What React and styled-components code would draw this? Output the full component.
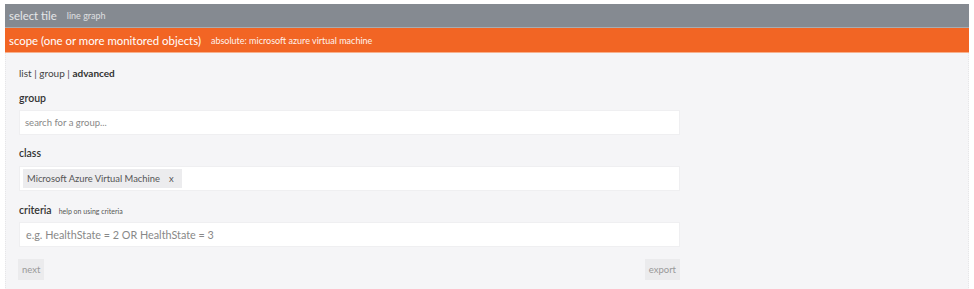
import React from "react";
import styled, { createGlobalStyle } from "styled-components";

const GlobalStyle = createGlobalStyle`
  body {
    margin: 0;
    background: #ffffff;
    font-family: Lato, "Open Sans", sans-serif;
  }
`;

const Page = styled.div`
  padding: 4px 5px 0 5px;
  width: 964px;
`;

const Bar = styled.div`
  display: flex;
  align-items: center;
  height: ${(p) => p.h}px;
  padding-left: 4px;
  background: ${(p) => p.bg};
  border-bottom: 1px solid ${(p) => p.line};
  color: ${(p) => p.fg};
`;

const BarTitle = styled.span`
  font-size: 11.4px;
`;

const BarSub = styled.span`
  font-size: 9px;
  margin-left: 10px;
  opacity: 0.92;
`;

const Panel = styled.div`
  background: #f5f5f7;
  border-left: 1px dotted #e6e6e8;
  border-right: 1px dotted #e6e6e8;
  padding: 13px 14px 10px 13px;
`;

const Form = styled.div`
  width: 661px;
  display: flex;
  flex-direction: column;
`;

const Modes = styled.div`
  font-size: 10px;
  line-height: 14px;
  color: #444;
  margin-bottom: 11px;
  b {
    font-weight: 700;
    color: #333;
  }
`;

const Label = styled.div`
  font-size: 10.5px;
  line-height: 14px;
  color: #333;
  font-weight: 600;
  margin-top: ${(p) => p.top || 0}px;
  margin-bottom: ${(p) => p.bottom || 5}px;
  display: flex;
  align-items: baseline;
`;

const Help = styled.span`
  font-size: 7px;
  font-weight: 400;
  color: #555;
  margin-left: 7px;
`;

const Field = styled.div`
  height: 25px;
  box-sizing: border-box;
  background: #fff;
  border: 1px solid #efeff1;
  display: flex;
  align-items: center;
  padding: 0 ${(p) => p.pad || 5}px;
  font-size: ${(p) => p.size || 9.5}px;
  color: #888;
`;

const Chip = styled.span`
  display: inline-flex;
  align-items: center;
  height: 19px;
  padding: 0 8px 0 4px;
  margin-left: -2px;
  background: #ececee;
  color: #555;
  font-size: 9.4px;
  gap: 9px;
`;

const Actions = styled.div`
  display: flex;
  justify-content: space-between;
  margin-top: 12px;
`;

const Button = styled.div`
  height: 21px;
  padding: 0 4px;
  display: flex;
  align-items: center;
  background: #ebebed;
  color: #999;
  font-size: 9.5px;
  margin-left: ${(p) => (p.inset ? "-1px" : "0")};
`;

export default function App() {
  return (
    <Page>
      <GlobalStyle />
      <Bar h={23} bg="#858a91" line="#a8acb0" fg="#e6e7e9">
        <BarTitle>select tile</BarTitle>
        <BarSub>line graph</BarSub>
      </Bar>
      <Bar h={24} bg="#f26524" line="#f8b08c" fg="#fff">
        <BarTitle>scope (one or more monitored objects)</BarTitle>
        <BarSub>absolute: microsoft azure virtual machine</BarSub>
      </Bar>
      <Panel>
        <Form>
          <Modes>
            list | group | <b>advanced</b>
          </Modes>
          <Label>group</Label>
          <Field>search for a group...</Field>
          <Label top={11} bottom={6}>
            class
          </Label>
          <Field>
            <Chip>
              Microsoft Azure Virtual Machine <span>x</span>
            </Chip>
          </Field>
          <Label top={12} bottom={4}>
            criteria <Help>help on using criteria</Help>
          </Label>
          <Field size={10.8} pad={6}>
            e.g. HealthState = 2 OR HealthState = 3
          </Field>
          <Actions>
            <Button inset>next</Button>
            <Button>export</Button>
          </Actions>
        </Form>
      </Panel>
    </Page>
  );
}
